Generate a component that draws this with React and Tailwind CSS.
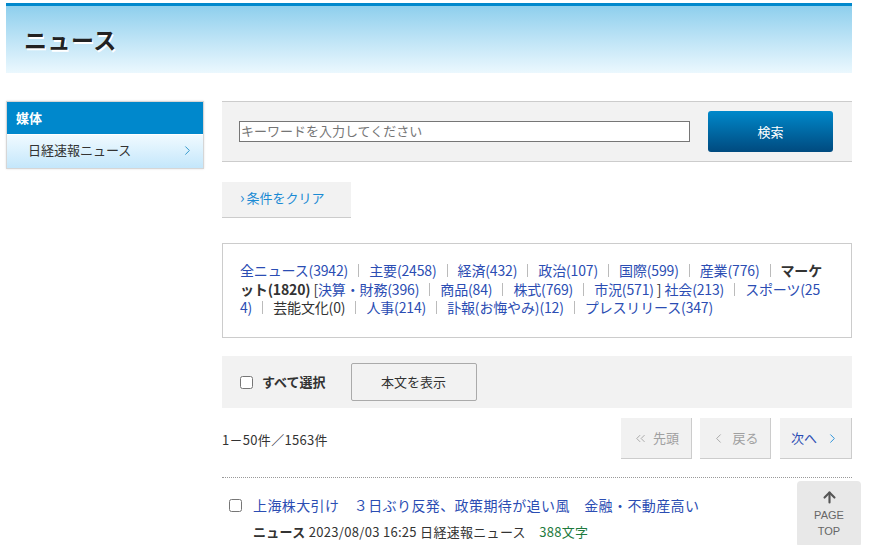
import { Fragment } from 'react'
import { ChevronRight, ChevronLeft, ChevronsLeft, ArrowUp } from 'lucide-react'

const font = { fontFamily: '"Noto Sans CJK JP", "Noto Sans", sans-serif' }

// category list; sep = draw a divider before the item
const categories = [
  { label: '全ニュース(3942)', kind: 'link' },
  { label: '主要(2458)', kind: 'link', sep: true },
  { label: '経済(432)', kind: 'link', sep: true },
  { label: '政治(107)', kind: 'link', sep: true },
  { label: '国際(599)', kind: 'link', sep: true },
  { label: '産業(776)', kind: 'link', sep: true },
  { label: 'マーケット(1820)', kind: 'bold', sep: true },
  { label: ' [', kind: 'plain' },
  { label: '決算・財務(396)', kind: 'link' },
  { label: '商品(84)', kind: 'link', sep: true },
  { label: '株式(769)', kind: 'link', sep: true },
  { label: '市況(571)', kind: 'link', sep: true },
  { label: ' ] ', kind: 'plain' },
  { label: '社会(213)', kind: 'link' },
  { label: 'スポーツ(254)', kind: 'link', sep: true },
  { label: '芸能文化(0)', kind: 'plain', sep: true },
  { label: '人事(214)', kind: 'link', sep: true },
  { label: '訃報(お悔やみ)(12)', kind: 'link', sep: true },
  { label: 'プレスリリース(347)', kind: 'link', sep: true },
]

const kindClass = {
  link: 'text-[#2b4db3]',
  bold: 'font-bold text-[#333]',
  plain: 'text-[#333]',
}

function Divider() {
  return <span className="inline-block w-px h-[13px] bg-[#bbbbbb] mx-[10px] align-[-1px]" />
}

export default function App() {
  return (
    <div className="w-[869px] min-h-[545px] bg-white text-[#333] relative" style={font}>
      <div className="w-[846px] ml-[6px] pt-[3px]">
        {/* Header */}
        <div className="h-[70px] border-t-[3px] border-[#0088cc] bg-gradient-to-b from-[#8ecfed] to-[#ebf8fe] flex items-center pl-[18px]">
          <h1 className="text-[23px] font-bold text-[#222] leading-none tracking-[0.5px] [text-shadow:1px_2px_0_#fff]">
            ニュース
          </h1>
        </div>

        <div className="flex gap-[18px] mt-[28px]">
          {/* Sidebar */}
          <div className="w-[198px] self-start border border-[#d6d6d6] shadow-[0_0_2px_rgba(0,0,0,0.12)]">
            <div className="h-[32px] bg-[#0088cc] flex items-center pl-[9px] pb-[1px] text-white font-bold text-[13px]">
              媒体
            </div>
            <div className="h-[34px] border-t border-white bg-gradient-to-b from-[#f0faff] to-[#c4e7fb] flex items-center justify-between pl-[21px] pr-[8px] pb-[3px] text-[13px] text-[#333]">
              <span>日経速報ニュース</span>
              <ChevronRight size={15} strokeWidth={1.6} className="text-[#3399cc]" />
            </div>
          </div>

          {/* Main column */}
          <div className="w-[630px]">
            {/* Search */}
            <div className="h-[61px] bg-[#f2f2f2] border-y border-[#cccccc] flex items-center pl-[17px]">
              <input
                type="text"
                placeholder="キーワードを入力してください"
                className="w-[451px] h-[21px] bg-white border border-[#767676] px-[1px] pb-[2px] text-[13px] placeholder:text-[#757575] outline-none"
                style={font}
              />
              <button className="ml-[18px] w-[125px] h-[41px] rounded-[3px] bg-gradient-to-b from-[#0089cb] to-[#004a7f] text-white text-[13px]">
                検索
              </button>
            </div>

            {/* Clear */}
            <div className="mt-[20px] w-[129px] h-[36px] bg-[#f2f2f2] border-b border-[#cccccc] flex items-center pl-[18px] pb-[4px] text-[13px] text-[#1a8ad4]">
              <span className="text-[15px] mr-[2px]">›</span>
              <span>条件をクリア</span>
            </div>

            {/* Categories */}
            <div className="mt-[25px] h-[95px] border border-[#cccccc] pt-[17px] pl-[17px] pr-[20px] text-[14px] leading-[18.5px] tracking-[-0.15px] break-all">
              {categories.map((c, i) => (
                <Fragment key={i}>
                  {c.sep && <Divider />}
                  <span className={kindClass[c.kind]}>{c.label}</span>
                </Fragment>
              ))}
            </div>

            {/* Actions */}
            <div className="mt-[18px] h-[52px] bg-[#f2f2f2] flex items-center pl-[18px]">
              <input type="checkbox" className="w-[13px] h-[13px] m-0" />
              <span className="ml-[9px] font-bold text-[13px] text-[#333]">すべて選択</span>
              <button className="ml-[25px] w-[126px] h-[38px] border border-[#aaaaaa] rounded-[2px] bg-[#f2f2f2] text-[13px] text-[#333]">
                本文を表示
              </button>
            </div>

            {/* Pager */}
            <div className="mt-[10px] flex items-center justify-between">
              <span className="text-[13px] text-[#333] pt-[2px] tracking-[0.3px]">1－50件／1563件</span>
              <div className="flex">
                <div className="w-[71px] h-[41px] bg-[#f1f1f1] border-r border-b border-[#cccccc] flex items-center justify-center gap-[5px] text-[13px] text-[#a0a0a0]">
                  <ChevronsLeft size={15} strokeWidth={1.4} />
                  <span>先頭</span>
                </div>
                <div className="ml-[8px] w-[71px] h-[41px] bg-[#f1f1f1] border-r border-b border-[#cccccc] flex items-center justify-center gap-[6px] text-[13px] text-[#a0a0a0]">
                  <ChevronLeft size={15} strokeWidth={1.4} />
                  <span>戻る</span>
                </div>
                <div className="ml-[9px] w-[72px] h-[41px] bg-[#f1f1f1] border-r border-b border-[#cccccc] flex items-center justify-center gap-[8px] text-[13px] text-[#2b4db3]">
                  <span>次へ</span>
                  <ChevronRight size={15} strokeWidth={1.6} className="text-[#2f95dc]" />
                </div>
              </div>
            </div>

            <div className="mt-[18px] border-t border-dotted border-[#999999]" />

            {/* Article */}
            <div className="flex items-center mt-[17px] pl-[7px]">
              <input type="checkbox" className="w-[13px] h-[13px] m-0" />
              <a className="ml-[11px] text-[14px] leading-[20px] tracking-[0.4px] text-[#2b4db3]">
                上海株大引け　３日ぶり反発、政策期待が追い風　金融・不動産高い
              </a>
            </div>
            <div className="mt-[8px] pl-[31px] flex text-[13px] leading-[18px] tracking-[0.3px] text-[#333] whitespace-pre">
              <span className="font-bold">ニュース</span>
              <span> 2023/08/03 16:25 日経速報ニュース{'\u3000'}</span>
              <span className="text-[#1e7a3e]">388文字</span>
            </div>
          </div>
        </div>
      </div>

      {/* Page top */}
      <div className="absolute left-[797px] top-[481px] w-[64px] h-[66px] rounded-[4px] bg-[#e8e8e8] flex flex-col items-center pt-[8px]">
        <ArrowUp size={17} strokeWidth={3} className="text-[#555]" />
        <span className="text-[11px] leading-[16px] text-[#666] mt-[1px]" style={{ fontFamily: '"Liberation Sans", sans-serif' }}>PAGE</span>
        <span className="text-[11px] leading-[16px] text-[#666]" style={{ fontFamily: '"Liberation Sans", sans-serif' }}>TOP</span>
      </div>
    </div>
  )
}
